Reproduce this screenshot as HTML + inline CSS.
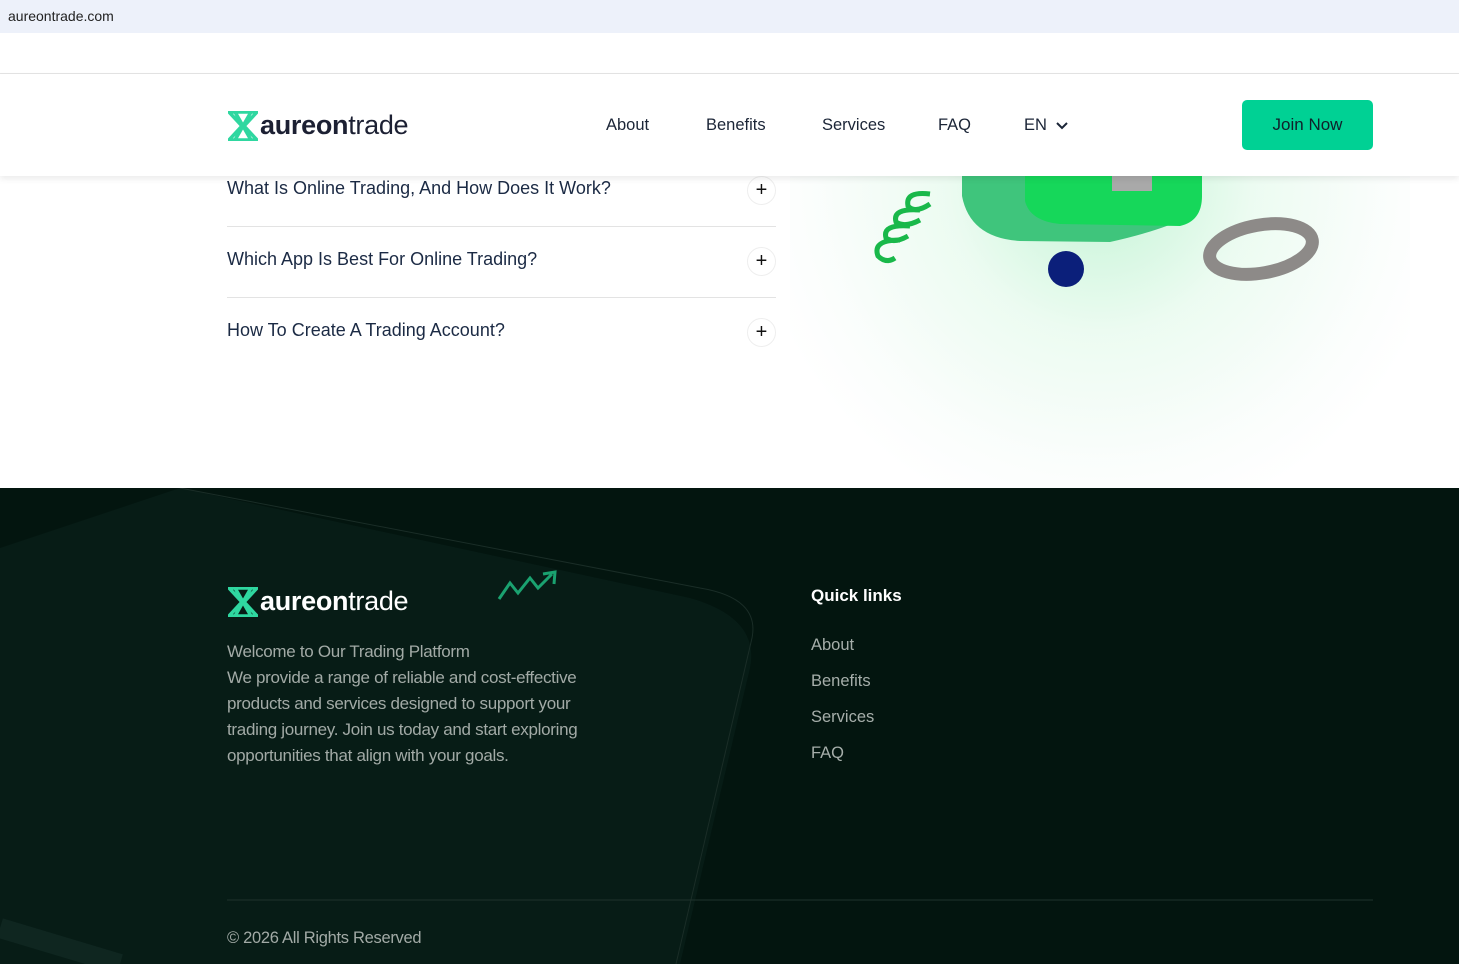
<!DOCTYPE html>
<html><head><meta charset="utf-8"><style>
*{margin:0;padding:0;box-sizing:border-box}
body{width:1459px;height:964px;overflow:hidden;background:#fff;font-family:"Liberation Sans",sans-serif;position:relative}
.url{position:absolute;left:0;top:0;width:1459px;height:33px;background:#edf1fa;font-size:14px;color:#222;padding:8px 8px}
.topline{position:absolute;top:73px;left:0;width:1459px;height:1px;background:#e4e4e4}
header{position:absolute;top:74px;left:0;width:1459px;height:102px;background:#fff;box-shadow:0 3px 6px rgba(0,0,0,.08);z-index:5}
.logo{position:absolute;display:flex;align-items:center}
.logo span{font-size:27px;letter-spacing:-0.3px}
.nav a{position:absolute;top:42px;font-size:16.5px;color:#1b2537;text-decoration:none}
.btn{position:absolute;left:1242px;top:26px;width:131px;height:50px;background:#00d194;border-radius:5px;color:#10202a;font-size:17px;text-align:center;line-height:50px}
.faq{position:absolute;left:227px;width:549px;height:71px;border-bottom:1px solid #e3e3e3;font-size:18px;color:#1b2a44}
.faq .q{position:absolute;left:0;top:0}
.plus{position:absolute;right:0;width:29px;height:29px;border-radius:50%;border:1px solid #eee;text-align:center;line-height:27px;font-size:20px;color:#111}
.glow{position:absolute;left:790px;top:100px;width:620px;height:390px;background:radial-gradient(ellipse at 50% 20%,rgba(120,230,160,.45) 0%,rgba(180,240,200,.25) 35%,rgba(240,250,245,.3) 65%,rgba(255,255,255,0) 80%)}
footer{position:absolute;top:488px;left:0;width:1459px;height:476px;background:#03150f;overflow:hidden}
.p{position:absolute;left:227px;top:151px;width:390px;color:#a2aaa6;font-size:17px;line-height:26px;letter-spacing:-0.3px}
.ql a{position:absolute;left:811px;color:#a6aeaa;font-size:16.5px}
</style></head><body>
<div class="url">aureontrade.com</div>
<div class="topline"></div>
<div class="glow"></div>
<svg style="position:absolute;left:790px;top:176px" width="620" height="120">
 <path d="M172 0 L172 20 Q180 62 230 65 L320 66 Q370 55 400 40 L410 0Z" fill="#3fc57c"/>
 <path d="M235 0 L235 25 Q240 45 270 48 L390 50 Q412 45 412 20 L412 0Z" fill="#16d75a"/>
 <rect x="322" y="0" width="40" height="15" fill="#a9a9a9"/>
 <g fill="none" stroke="#19b84a" stroke-width="5">
 <path d="M140 18 Q115 15 118 30 Q125 38 140 28"/><path d="M130 34 Q102 32 106 46 Q115 52 130 44"/><path d="M120 50 Q92 48 96 62 Q104 68 118 60"/><path d="M110 64 Q82 64 88 80 Q96 88 105 82"/></g>
 <ellipse cx="276" cy="93" rx="18" ry="18" fill="#0b1f7a"/>
 <ellipse cx="471" cy="73" rx="52" ry="24" fill="none" stroke="#8d8a88" stroke-width="13" transform="rotate(-10 471 73)"/>
</svg>
<div class="faq" style="top:176px;height:51px"><div class="q" style="top:2px">What Is Online Trading, And How Does It Work?</div><div class="plus" style="top:0">+</div></div>
<div class="faq" style="top:227px"><div class="q" style="top:22px">Which App Is Best For Online Trading?</div><div class="plus" style="top:20px">+</div></div>
<div class="faq" style="top:298px;border:none"><div class="q" style="top:22px">How To Create A Trading Account?</div><div class="plus" style="top:20px">+</div></div>
<header>
 <div class="logo" style="left:228px;top:36px">
  <svg width="30" height="30" viewBox="0 0 30 30"><path d="M1 1H29L16 15L29 29H1L14 15Z M7 1L23 29 M23 1L7 29" fill="none" stroke="#2fd7a0" stroke-width="3.5"/></svg>
  <span style="color:#1c2033;margin-left:2px"><b>aureon</b>trade</span></div>
 <div class="nav"><a style="left:606px">About</a><a style="left:706px">Benefits</a><a style="left:822px">Services</a><a style="left:938px">FAQ</a><a style="left:1024px">EN <svg width="12" height="8" style="margin-left:4px"><path d="M1 1L6 6L11 1" fill="none" stroke="#1b2537" stroke-width="2"/></svg></a></div>
 <div class="btn">Join Now</div>
</header>
<footer>
 <svg style="position:absolute;left:0;top:0" width="1459" height="476">
  <path d="M180 0 L690 110 Q760 130 750 180 L680 476 L0 476 L0 60Z" fill="#0a1f19" opacity=".75"/>
  <path d="M180 0 L700 100 Q760 110 752 150 L676 476" fill="none" stroke="#1a2d27" stroke-width="1"/>
  <path d="M0 440 L120 476" stroke="#0f2620" stroke-width="20"/>
  <path d="M499 111 L510 95 L518 105 L530 90 L538 100 L552 86 M543 86 L555 84 L554 96" fill="none" stroke="#1aa270" stroke-width="3"/>
  <line x1="227" y1="412" x2="1373" y2="412" stroke="#1f322c"/>
 </svg>
 <div class="logo" style="left:228px;top:98px">
  <svg width="30" height="30" viewBox="0 0 30 30"><path d="M1 1H29L16 15L29 29H1L14 15Z M7 1L23 29 M23 1L7 29" fill="none" stroke="#2fd7a0" stroke-width="3.5"/></svg>
  <span style="color:#fff;margin-left:2px"><b>aureon</b>trade</span></div>
 <div class="p">Welcome to Our Trading Platform<br>We provide a range of reliable and cost-effective products and services designed to support your trading journey. Join us today and start exploring opportunities that align with your goals.</div>
 <div style="position:absolute;left:811px;top:98px;color:#fff;font-weight:bold;font-size:17px">Quick links</div>
 <div class="ql"><a style="top:148px">About</a><a style="top:184px">Benefits</a><a style="top:220px">Services</a><a style="top:256px">FAQ</a></div>
 <div style="position:absolute;left:227px;top:441px;color:#a2aaa6;font-size:16.5px;letter-spacing:-0.3px">© 2026 All Rights Reserved</div>
</footer>
</body></html>
